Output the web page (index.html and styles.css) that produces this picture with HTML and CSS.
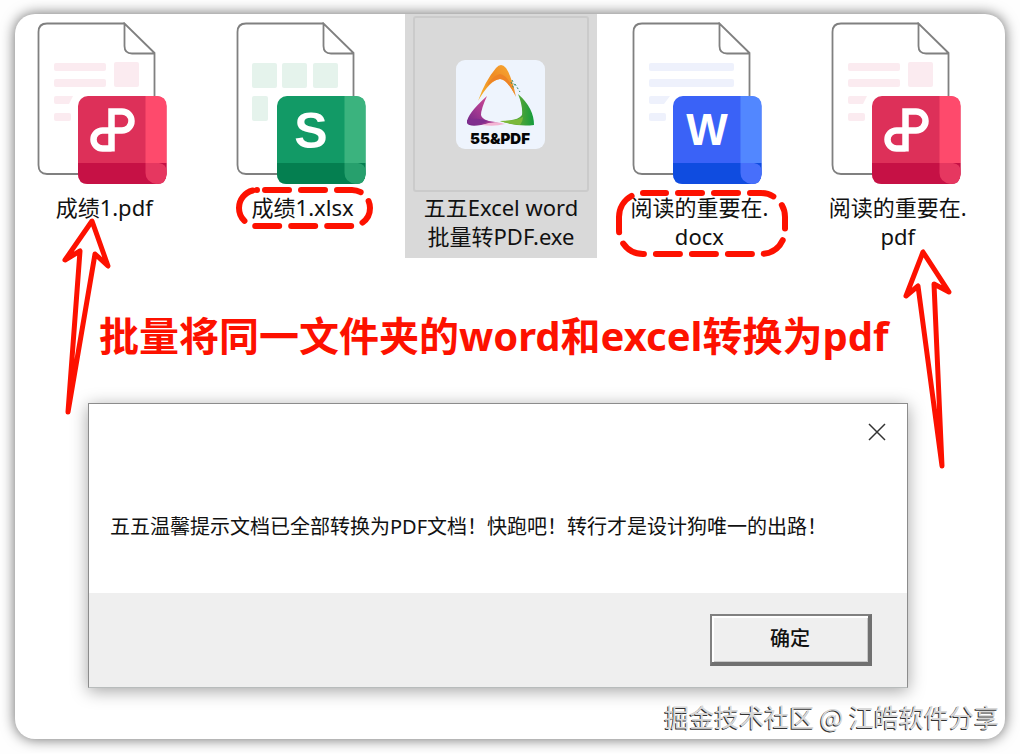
FILE: index.html
```
<!DOCTYPE html>
<html lang="zh-CN">
<head>
<meta charset="utf-8">
<meta name="viewport" content="width=device-width, initial-scale=1">
<title>批量转PDF</title>
<link rel="stylesheet" href="styles.css">
</head>
<body>
<svg class="defs" aria-hidden="true">
  <defs>
    <symbol id="page" viewBox="0 0 134 164">
      <path d="M87.500 1.500H10Q1.500 1.500 1.500 10V143Q1.500 152 10 152H117.500V31L87.500 1.500V24Q87.500 31.500 95 31.500H117" fill="#fff" stroke="#808080" stroke-width="1.800"/>
    </symbol>
    <symbol id="pdf-file" viewBox="0 0 134 164">
      <use href="#page" width="134" height="164"/>
      <g fill="#fbebf0">
        <rect x="17" y="41" width="52" height="8" rx="2"/>
        <rect x="17" y="57" width="52" height="8" rx="2"/>
        <path d="M19 74H36L32 82H19Q17 82 17 80V76Q17 74 19 74Z"/>
        <rect x="17" y="91" width="17" height="8" rx="2"/>
        <rect x="77" y="40" width="25" height="25" rx="2"/>
      </g>
      <rect x="41" y="74" width="88.500" height="88" rx="10" fill="#dd3059"/>
      <path d="M108.500 74H119.500Q129.500 74 129.500 84V141H108.500Z" fill="#fe4a6c"/>
      <path d="M41 141H129.500V152Q129.500 162 119.500 162H51Q41 162 41 152Z" fill="#c61145"/>
      <path d="M108.500 141H122Q129.500 142 129.500 149V152Q129.500 162 119.500 162Q108.500 160 108.500 151Z" fill="#e63760"/>
      <path d="M74.500 129.500V89.500H85A9.500 9.500 0 0 1 85 108.500H65.500A9 9 0 0 0 65.500 126.500H74.500" fill="none" stroke="#fff" stroke-width="6.500"/>
    </symbol>
    <linearGradient id="orange" x1="0" y1="1" x2="1" y2="0"><stop offset="0" stop-color="#f6b52c"/><stop offset=".55" stop-color="#ef8c25"/><stop offset="1" stop-color="#f9ae36"/></linearGradient>
    <linearGradient id="purple" x1="0" y1="1" x2="1" y2="0"><stop offset="0" stop-color="#6b2787"/><stop offset=".5" stop-color="#ad3c92"/><stop offset="1" stop-color="#dc508f"/></linearGradient>
    <linearGradient id="green" x1="0" y1="0" x2="1" y2="0"><stop offset="0" stop-color="#8bbf3a"/><stop offset=".65" stop-color="#48a338"/><stop offset="1" stop-color="#129b3c"/></linearGradient>
  </defs>
</svg>

<main class="card">
  <ul class="files">
    <li class="file">
      <div class="thumb"><svg class="doc" role="img" aria-label="PDF"><use href="#pdf-file"/></svg></div>
      <span class="name">成绩1.pdf</span>
    </li>
    <li class="file">
      <div class="thumb">
        <svg class="doc" viewBox="0 0 134 164" role="img" aria-label="XLSX">
          <use href="#page" width="134" height="164"/>
          <g fill="#e5f3ec">
            <rect x="16" y="41" width="25" height="25" rx="2"/>
            <rect x="46" y="41" width="25" height="25" rx="2"/>
            <rect x="77" y="41" width="25" height="25" rx="2"/>
            <rect x="16" y="74" width="16" height="25" rx="2"/>
          </g>
          <rect x="41" y="74" width="88.500" height="88" rx="10" fill="#129a66"/>
          <path d="M108.500 74H119.500Q129.500 74 129.500 84V141H108.500Z" fill="#3bb37e"/>
          <path d="M41 141H129.500V152Q129.500 162 119.500 162H51Q41 162 41 152Z" fill="#047f50"/>
          <path d="M108.500 141H122Q129.500 142 129.500 149V152Q129.500 162 119.500 162Q108.500 160 108.500 151Z" fill="#27a06d"/>
          <text class="mark mark-s" x="75" y="126">S</text>
        </svg>
      </div>
      <span class="name">成绩1.xlsx</span>
      <svg class="ring ring-short" viewBox="0 0 140 44" aria-hidden="true"><rect x="4" y="4" width="131" height="36" rx="18" stroke-dasharray="0 8 24 12 24 12 24 12 24 12 24 12 24 12 24 12 38 99"/></svg>
    </li>
    <li class="file selected">
      <div class="thumb">
        <svg class="app" viewBox="0 0 89 89" role="img" aria-label="55&amp;PDF">
          <rect width="89" height="89" rx="9" fill="#eef4fd"/>
          <path d="M22 41Q29 21 40 8Q45 2 50 8Q56 17 60 37Q51 19 44 19Q34 20 22 41Z" fill="url(#orange)"/>
          <path d="M33 22Q39 15 44 14Q50 15 54 23L59 35Q51 19 44 19Q37 20 31 26Z" fill="#ee8326"/>
          <path d="M56 20L59 26M59 24L64 32M55 22L58 29" stroke="#348b65" stroke-width="1" stroke-dasharray="2 2" fill="none"/>
          <path d="M31 36Q10 55 11 63Q13 67 25 65L43 62Q27 62 25 55Q25 49 31 36Z" fill="url(#purple)"/>
          <path d="M11 60Q22 57 32 61Q24 65 12 64Z" fill="#802e8e"/>
          <path d="M26 65Q38 60 49 64Q38 67 26 65Z" fill="#f3b4d3"/>
          <path d="M62 34Q78 48 78 65Q61 67 44 61Q62 61 66 55Q67 46 62 34Z" fill="url(#green)"/>
          <path d="M44 61Q61 61 67 57Q67 61 64 65Q53 64 44 61Z" fill="#7cb83a"/>
          <text class="brand" x="44" y="84">55&amp;PDF</text>
        </svg>
      </div>
      <span class="name">五五Excel word<br>批量转PDF.exe</span>
    </li>
    <li class="file">
      <div class="thumb">
        <svg class="doc" viewBox="0 0 134 164" role="img" aria-label="DOCX">
          <use href="#page" width="134" height="164"/>
          <g fill="#eef1fc">
            <rect x="17" y="41" width="85" height="8" rx="2"/>
            <rect x="17" y="57" width="85" height="8" rx="2"/>
            <path d="M19 74H38L32 82H19Q17 82 17 80V76Q17 74 19 74Z"/>
            <rect x="17" y="91" width="17" height="8" rx="2"/>
          </g>
          <rect x="41" y="74" width="88.500" height="88" rx="10" fill="#3a62f7"/>
          <path d="M108.500 74H119.500Q129.500 74 129.500 84V141H108.500Z" fill="#5287ff"/>
          <path d="M41 141H129.500V152Q129.500 162 119.500 162H51Q41 162 41 152Z" fill="#0f4ce0"/>
          <path d="M108.500 141H122Q129.500 142 129.500 149V152Q129.500 162 119.500 162Q108.500 160 108.500 151Z" fill="#476ffb"/>
          <text class="mark mark-w" x="75" y="123">W</text>
        </svg>
      </div>
      <span class="name">阅读的重要在.<br>docx</span>
      <svg class="ring ring-tall" viewBox="0 0 174 70" aria-hidden="true"><rect x="4" y="4" width="166" height="61" rx="24" stroke-dasharray="23 12 24 12 24 12 24 12 24 12 24 12 24 12 24 12 24 12 24 12 41 99"/></svg>
    </li>
    <li class="file">
      <div class="thumb"><svg class="doc" role="img" aria-label="PDF"><use href="#pdf-file"/></svg></div>
      <span class="name">阅读的重要在.<br>pdf</span>
    </li>
  </ul>

  <h1 class="title">批量将同一文件夹的word和excel转换为pdf</h1>

  <section class="dialog" role="dialog" aria-labelledby="message">
    <header class="dialog-bar">
      <button class="close" type="button" aria-label="关闭"><svg viewBox="0 0 18 18"><path d="M1 1L17 17M17 1L1 17"/></svg></button>
    </header>
    <p class="message" id="message">五五温馨提示文档已全部转换为PDF文档！快跑吧！转行才是设计狗唯一的出路！</p>
    <footer class="dialog-actions"><button class="confirm" type="button">确定</button></footer>
  </section>

  <p class="credit">掘金技术社区 @ 江皓软件分享</p>

  <svg class="arrow arrow-left" viewBox="0 0 56 204" aria-hidden="true"><path d="M32 6L5 45L20 36L8 197L35 39L48 51Z"/></svg>
  <svg class="arrow arrow-right" viewBox="0 0 56 226" aria-hidden="true"><path d="M23 6L6 50L18 40L42 220L34 38L49 46Z"/></svg>
</main>
</body>
</html>
```
FILE: styles.css
```
* {
  box-sizing: border-box;
}

body {
  margin: 0;
  padding: 14px 15px;
  background: #fefefe;
  color: #111;
  font-family: "Noto Sans", "Noto Sans CJK SC", sans-serif;
}

.defs {
  position: absolute;
  width: 0;
  height: 0;
}

.card {
  position: relative;
  padding-bottom: 7px;
  border-radius: 20px;
  background: #fff;
  box-shadow: 0 0 14px rgba(0, 0, 0, 0.6);
}

.files {
  display: grid;
  grid-template-columns: repeat(5, 1fr);
  margin: 0 8px 0 -10px;
  padding: 0;
  list-style: none;
}

.file {
  position: relative;
  display: flex;
  flex-direction: column;
  gap: 1px;
  margin: 0 3px;
  padding: 2px 8px 7px;
  text-align: center;
}

.selected {
  background: #d9d9d9;
}

.thumb {
  display: flex;
  justify-content: center;
  height: 176px;
  padding-top: 5px;
  border: 1px solid transparent;
}

.selected .thumb {
  align-items: center;
  padding-top: 0;
  border: 2px solid #cbcbcb;
  border-radius: 3px;
}

.doc {
  width: 134px;
  height: 164px;
}

.app {
  width: 89px;
  height: 89px;
}

.mark {
  fill: #fff;
  font-family: "Liberation Sans", sans-serif;
  font-weight: 700;
  text-anchor: middle;
}

.mark-s {
  font-size: 50px;
}

.mark-w {
  font-size: 44px;
}

.brand {
  fill: #050505;
  font-family: Inter, sans-serif;
  font-size: 15px;
  font-weight: 900;
  text-anchor: middle;
}

.name {
  font-size: 22px;
  line-height: 29px;
  white-space: nowrap;
}

.ring {
  position: absolute;
  fill: none;
  stroke: #fd1100;
  stroke-width: 6px;
  stroke-linecap: round;
}

.ring-short {
  top: 172px;
  left: 29px;
  width: 140px;
  height: 44px;
}

.ring-tall {
  top: 175px;
  left: 12px;
  width: 174px;
  height: 70px;
}

.title {
  margin: 54px 0 43px 84px;
  color: #fd1100;
  font-size: 40px;
  font-weight: 700;
  line-height: 48px;
}

.dialog {
  margin: 0 97px 0 73px;
  border: 1px solid #8c8c8c;
  border-bottom-color: #b8bcbc;
  background: #fff;
  box-shadow: 0 3px 16px rgba(0, 0, 0, 0.36);
}

.dialog-bar {
  display: flex;
  justify-content: flex-end;
  padding: 19px 21px 0;
}

.close {
  display: flex;
  padding: 0;
  border: 0;
  background: none;
}

.close svg {
  width: 18px;
  height: 18px;
  fill: none;
  stroke: #333;
  stroke-width: 1.5px;
}

.message {
  margin: 0;
  padding: 72px 21px 52px;
  font-size: 20px;
  line-height: 28px;
}

.dialog-actions {
  display: flex;
  justify-content: flex-end;
  padding: 21px 35px;
  background: #efefef;
}

.confirm {
  width: 162px;
  height: 52px;
  padding: 0 0 4px;
  border: 2px solid #808080;
  border-right: 4px solid #707070;
  border-bottom: 4px solid #707070;
  background: #efefef;
  box-shadow: inset 2px 2px 0 #fff, inset -1px -1px 0 #c8c8c8;
  color: #111;
  font-family: "Noto Sans CJK SC", sans-serif;
  font-size: 20px;
  font-weight: 500;
}

.credit {
  margin: 12px 6px 0;
  color: #d8d8d8;
  font-family: "Noto Sans CJK SC", sans-serif;
  font-size: 25px;
  line-height: 32px;
  text-align: right;
  text-shadow: -1px 1px 0 #333;
}

.arrow {
  position: absolute;
  width: 56px;
  fill: none;
  stroke: #fd1100;
  stroke-width: 5px;
  stroke-linejoin: round;
}

.arrow-left {
  top: 201px;
  left: 45px;
  height: 204px;
}

.arrow-right {
  top: 232px;
  right: 49px;
  height: 226px;
}
```
